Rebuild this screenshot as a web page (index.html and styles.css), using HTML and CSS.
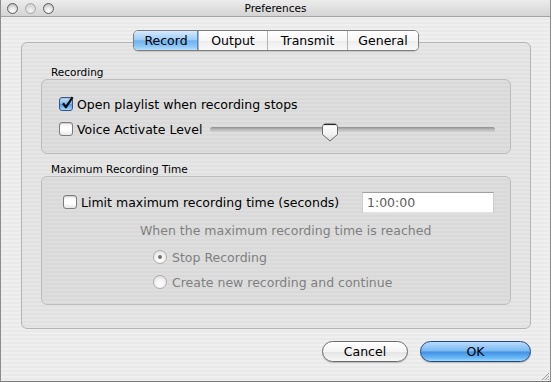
FILE: index.html
```html
<!DOCTYPE html>
<html lang="en">

<head>
    <meta charset="UTF-8">
    <title>Preferences</title>
    <link rel="stylesheet" href="styles.css">
</head>

<body>
    <div class="window">
        <div class="titlebar">
            <div class="lights">
                <span class="light"></span>
                <span class="light off"></span>
                <span class="light"></span>
            </div>
            <div class="title">Preferences</div>
            <div class="lights-spacer"></div>
        </div>
        <div class="content">
            <div class="tabs">
                <span class="tab active tab-record">Record</span>
                <span class="tab tab-output">Output</span>
                <span class="tab tab-transmit">Transmit</span>
                <span class="tab tab-general">General</span>
            </div>
            <div class="tabbox">
                <div class="group-label">Recording</div>
                <div class="group group-rec">
                    <div class="row">
                        <span class="check on">
                            <svg width="14" height="14" viewBox="0 0 14 14">
                                <path d="M3 7.2 L6 11.2 L12.6 1.2" fill="none" stroke="#111" stroke-width="2.3" stroke-linejoin="round" />
                            </svg>
                        </span>
                        <span>Open playlist when recording stops</span>
                    </div>
                    <div class="row">
                        <span class="check"></span>
                        <span>Voice Activate Level</span>
                        <div class="slider">
                            <div class="track"></div>
                            <svg class="thumb" width="18" height="19" viewBox="0 0 18 19">
                                <defs>
                                    <linearGradient id="thumbFill" x1="0" y1="0" x2="0" y2="1">
                                        <stop offset="0" stop-color="#ffffff" />
                                        <stop offset="0.6" stop-color="#f2f2f2" />
                                        <stop offset="1" stop-color="#d8d8d8" />
                                    </linearGradient>
                                </defs>
                                <path d="M1.5 4 Q1.5 1 4.5 1 H13.5 Q16.5 1 16.5 4 V11.5 L9 18 L1.5 11.5 Z" fill="url(#thumbFill)" stroke="#6a6a6a" stroke-width="1" />
                                <path d="M3 1.5 H15" stroke="#2a2a2a" stroke-width="1.2" />
                            </svg>
                        </div>
                    </div>
                </div>
                <div class="group-label label-max">Maximum Recording Time</div>
                <div class="group group-max">
                    <div class="row row-limit">
                        <span class="check"></span>
                        <span>Limit maximum recording time (seconds)</span>
                        <div class="field">1:00:00</div>
                    </div>
                    <div class="hint">When the maximum recording time is reached</div>
                    <div class="row radio-row">
                        <span class="radio on"></span>
                        <span>Stop Recording</span>
                    </div>
                    <div class="row radio-row second">
                        <span class="radio"></span>
                        <span>Create new recording and continue</span>
                    </div>
                </div>
            </div>
            <div class="buttons">
                <button class="btn btn-cancel">Cancel</button>
                <button class="btn btn-ok">OK</button>
            </div>
        </div>
        <svg class="grip" width="10" height="10" viewBox="0 0 10 10">
            <path d="M9 2 L2 9 M9 5 L5 9 M9 8 L8 9" stroke="#9a9a9a" stroke-width="1" />
        </svg>
    </div>
</body>

</html>
```

FILE: styles.css
```css
body {
    margin: 0;
    padding: 0;
    background: #ffffff;
    font-family: 'DejaVu Sans', 'Liberation Sans', sans-serif;
    font-size: 12.5px;
    color: #000000;
}

.window {
    position: relative;
    width: 551px;
    height: 382px;
    box-sizing: border-box;
    border-left: 1px solid #8c8c8c;
    border-right: 1px solid #8c8c8c;
    border-bottom: 1px solid #7a7a7a;
    background: repeating-linear-gradient(to bottom, #efefef 0, #efefef 2px, #e9e9e9 2px, #e9e9e9 4px);
}

.titlebar {
    height: 16px;
    display: flex;
    align-items: center;
    border-bottom: 1px solid #a2a2a2;
    background: linear-gradient(#ececec, #d4d4d4);
}

.lights {
    width: 54px;
    display: flex;
    gap: 7px;
    padding-left: 6px;
    box-sizing: border-box;
}

.lights-spacer {
    width: 54px;
}

.light {
    width: 11px;
    height: 11px;
    border-radius: 50%;
    box-sizing: border-box;
    border: 1px solid #5e5e5e;
    background: radial-gradient(circle at 50% 75%, #ffffff 0, #e4e4e4 45%, #a9a9a9 100%);
}

.light.off {
    border-color: #a8a8a8;
    background: radial-gradient(circle at 50% 75%, #f4f4f4 0, #dedede 50%, #c4c4c4 100%);
}

.title {
    flex: 1;
    text-align: center;
    font-size: 10.5px;
    line-height: 16px;
}

.content {
    padding: 13px 19px 0 20px;
}

.tabs {
    position: relative;
    z-index: 1;
    display: flex;
    width: max-content;
    margin: 0 auto -9px;
    border: 1px solid #7e7e7e;
    border-radius: 5px;
    overflow: hidden;
    box-shadow: 0 1px 1px rgba(0, 0, 0, 0.15);
}

.tab {
    height: 19px;
    line-height: 19px;
    text-align: center;
    border-left: 1px solid #b2b2b2;
    background: linear-gradient(#ffffff, #f7f7f7 50%, #ececec 51%, #f9f9f9);
}

.tab.tab-record {
    width: 64px;
    border-left: none;
}

.tab.tab-output {
    width: 68px;
}

.tab.tab-transmit {
    width: 79px;
}

.tab.tab-general {
    width: 70px;
}

.tab.active {
    background: linear-gradient(#d6eafd, #9fcdf7 45%, #6fb3f1 52%, #8cc6f7 80%, #b9e0fc);
    box-shadow: inset -1px 0 0 #5587c4;
}

.tabbox {
    border: 1px solid #b4b4b4;
    border-radius: 6px;
    padding: 22px 19px 23px;
    background: repeating-linear-gradient(to bottom, #e6e6e6 0, #e6e6e6 2px, #e1e1e1 2px, #e1e1e1 4px);
}

.group-label {
    font-size: 10.5px;
    line-height: 14px;
    padding-left: 10px;
}

.group-label.label-max {
    margin-top: 8px;
}

.group {
    border: 1px solid #bdbdbd;
    border-radius: 6px;
    background: repeating-linear-gradient(to bottom, #dedede 0, #dedede 2px, #d9d9d9 2px, #d9d9d9 4px);
}

.group-rec {
    padding: 14px 15px 14px 17px;
    display: flex;
    flex-direction: column;
    gap: 5px;
}

.group-max {
    padding: 14px 16px 12px 21px;
}

.row {
    height: 20px;
    display: flex;
    align-items: center;
    gap: 4px;
}

.check {
    width: 14px;
    height: 14px;
    box-sizing: border-box;
    border: 1px solid #7d7d7d;
    border-radius: 3px;
    background: linear-gradient(#f0f0f0, #ffffff 40%, #ffffff 60%, #e6e6e6);
    box-shadow: inset 0 1px 1px rgba(0, 0, 0, 0.15);
    position: relative;
}

.check.on {
    border-color: #35588c;
    background: linear-gradient(#cde6fc, #79b6ef 50%, #4f99e6 51%, #a8d6fb);
}

.check svg {
    position: absolute;
    left: 0;
    top: -2px;
}

.slider {
    position: relative;
    margin-left: auto;
    width: 285px;
    height: 20px;
    display: flex;
    align-items: center;
}

.track {
    width: 100%;
    height: 5px;
    border-radius: 3px;
    background: linear-gradient(#8f8f8f, #b9b9b9 50%, #d2d2d2);
}

.thumb {
    position: absolute;
    left: 111px;
    top: 4px;
}

.row-limit {
    height: 22px;
}

.field {
    margin-left: auto;
    width: 132px;
    height: 21px;
    box-sizing: border-box;
    padding-left: 4px;
    line-height: 20px;
    color: #5c5c5c;
    background: #ffffff;
    border-top: 1px solid #a0a0a0;
    border-left: 1px solid #cdcdcd;
    border-right: 1px solid #cdcdcd;
    border-bottom: 1px solid #e4e4e4;
}

.hint {
    margin: 10px 0 0 77px;
    line-height: 16px;
    color: #7f7f7f;
}

.radio-row {
    margin: 8px 0 0 90px;
    gap: 5px;
    color: #7f7f7f;
}

.radio-row.second {
    margin-top: 5px;
}

.radio {
    width: 14px;
    height: 14px;
    box-sizing: border-box;
    border: 1px solid #acacac;
    border-radius: 50%;
    background: radial-gradient(circle at 50% 70%, #ffffff 0, #f2f2f2 50%, #d6d6d6 100%);
    display: flex;
    align-items: center;
    justify-content: center;
}

.radio.on::after {
    content: "";
    width: 4px;
    height: 4px;
    border-radius: 50%;
    background: #707070;
}

.buttons {
    display: flex;
    justify-content: flex-end;
    gap: 12px;
    margin-top: 12px;
}

.btn {
    height: 21px;
    padding: 0;
    border-radius: 11px;
    font-family: 'DejaVu Sans', 'Liberation Sans', sans-serif;
    font-size: 12.5px;
    color: #000000;
    box-shadow: 0 1px 1px rgba(0, 0, 0, 0.2);
}

.btn-cancel {
    width: 86px;
    border: 1px solid #6c6c6c;
    background: linear-gradient(#ffffff, #f4f4f4 50%, #e4e4e4 52%, #f7f7f7);
}

.btn-ok {
    width: 111px;
    border: 1px solid #23477f;
    background: linear-gradient(#b9dbfb, #78b8f2 48%, #3f8fe5 52%, #6cbaf7 85%, #a4dcfd);
}

.grip {
    position: absolute;
    right: 0;
    bottom: 0;
}
```
